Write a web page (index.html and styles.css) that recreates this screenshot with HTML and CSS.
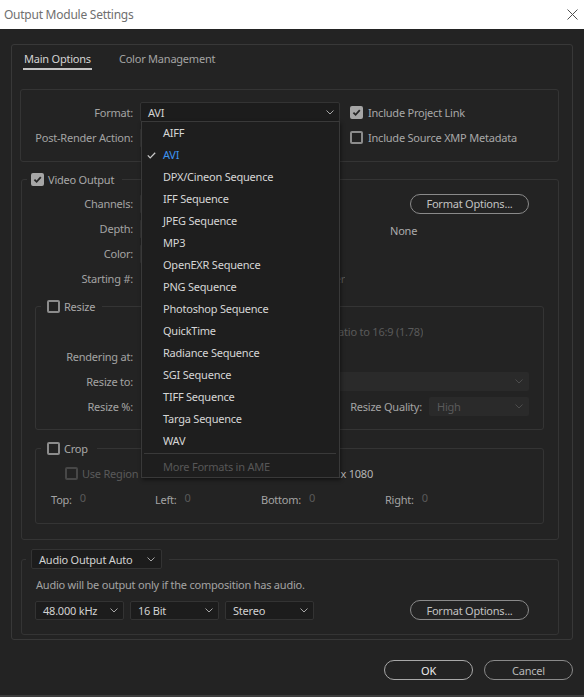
FILE: index.html
```html
<!DOCTYPE html>
<html lang="en">
<head>
<meta charset="utf-8">
<title>Output Module Settings</title>
<link rel="stylesheet" href="styles.css">
</head>
<body>
<div class="window">
  <header class="titlebar">
    <span class="title">Output Module Settings</span>
    <svg class="close" viewBox="0 0 11 11"><path d="M.5.5l10 10M10.5.5l-10 10"/></svg>
  </header>

  <main class="content">
    <section class="panel">
      <nav class="tabs">
        <span class="tab active">Main Options</span>
        <span class="tab">Color Management</span>
      </nav>

      <div class="format-box">
        <div class="frow">
          <span class="lbl flbl">Format:</span>
          <div class="sel format-sel">
            <span class="val">AVI</span>
            <svg class="chev" viewBox="0 0 8 5"><path d="M.5.5 4 4 7.5.5"/></svg>
            <ul class="menu">
              <li class="item">AIFF</li>
              <li class="item selected"><svg class="tick" viewBox="0 0 9 7"><path d="M.8 3.4 3.2 5.9 8.2.7"/></svg>AVI</li>
              <li class="item">DPX/Cineon Sequence</li>
              <li class="item">IFF Sequence</li>
              <li class="item">JPEG Sequence</li>
              <li class="item">MP3</li>
              <li class="item">OpenEXR Sequence</li>
              <li class="item">PNG Sequence</li>
              <li class="item">Photoshop Sequence</li>
              <li class="item">QuickTime</li>
              <li class="item">Radiance Sequence</li>
              <li class="item">SGI Sequence</li>
              <li class="item">TIFF Sequence</li>
              <li class="item">Targa Sequence</li>
              <li class="item">WAV</li>
              <li class="sep"></li>
              <li class="item more">More Formats in AME</li>
            </ul>
          </div>
          <label class="chk">
            <span class="cb on"><svg viewBox="0 0 9 9"><path d="M1.4 4.6 3.6 6.8 7.8 2.2"/></svg></span>
            <span>Include Project Link</span>
          </label>
        </div>
        <div class="frow">
          <span class="lbl flbl">Post-Render Action:</span>
          <div class="sel post-sel"></div>
          <label class="chk">
            <span class="cb"></span>
            <span>Include Source XMP Metadata</span>
          </label>
        </div>
      </div>

      <fieldset class="group video">
        <legend class="leg">
          <span class="leg-in">
            <span class="cb on"><svg viewBox="0 0 9 9"><path d="M1.4 4.6 3.6 6.8 7.8 2.2"/></svg></span>
            <span>Video Output</span>
          </span>
        </legend>
        <div class="video-in">
          <div class="vrow">
            <span class="lbl vlbl">Channels:</span>
            <div class="sel hidden-sel"></div>
            <button class="btn fmt-btn">Format Options...</button>
          </div>
          <div class="vrow">
            <span class="lbl vlbl">Depth:</span>
            <div class="sel hidden-sel"></div>
            <span class="none-val">None</span>
          </div>
          <div class="vrow">
            <span class="lbl vlbl">Color:</span>
            <div class="sel hidden-sel"></div>
          </div>
          <div class="vrow">
            <span class="lbl vlbl">Starting #:</span>
            <div class="tail start-tail">
              <span class="cb dis"></span>
              <span class="faint">Use Comp Frame Number</span>
            </div>
          </div>

          <fieldset class="group sub resize">
            <legend class="leg sub-leg">
              <span class="leg-in">
                <span class="cb"></span>
                <span>Resize</span>
              </span>
            </legend>
            <div class="sub-in">
              <div class="rrow">
                <span class="lbl rlbl"></span>
                <div class="tail lock-tail">
                  <span class="cb dis"></span>
                  <span class="faint">Lock Aspect Ratio to 16:9 (1.78)</span>
                </div>
              </div>
              <div class="rrow">
                <span class="lbl rlbl">Rendering at:</span>
              </div>
              <div class="rrow">
                <span class="lbl rlbl">Resize to:</span>
                <div class="dsel resize-sel"><span></span><svg class="chev dim" viewBox="0 0 8 5"><path d="M.5.5 4 4 7.5.5"/></svg></div>
              </div>
              <div class="rrow">
                <span class="lbl rlbl">Resize %:</span>
                <span class="quality-lbl">Resize Quality:</span>
                <div class="dsel quality-sel"><span class="faint">High</span><svg class="chev dim" viewBox="0 0 8 5"><path d="M.5.5 4 4 7.5.5"/></svg></div>
              </div>
            </div>
          </fieldset>

          <fieldset class="group sub crop">
            <legend class="leg sub-leg crop-leg">
              <span class="leg-in">
                <span class="cb"></span>
                <span>Crop</span>
              </span>
            </legend>
            <div class="sub-in crop-in">
              <div class="crow1">
                <span class="cb dis"></span>
                <span class="faint roi">Use Region of Interest</span>
                <span class="final">Final Size: 1920 x 1080</span>
              </div>
              <div class="crow2">
                <span class="cell"><span>Top:</span><span class="faint num">0</span></span>
                <span class="cell"><span>Left:</span><span class="faint num">0</span></span>
                <span class="cell"><span>Bottom:</span><span class="faint num">0</span></span>
                <span class="cell"><span>Right:</span><span class="faint num">0</span></span>
              </div>
            </div>
          </fieldset>
        </div>
      </fieldset>

      <fieldset class="group audio">
        <legend class="leg audio-leg">
          <div class="sel audio-sel"><span class="val">Audio Output Auto</span><svg class="chev" viewBox="0 0 8 5"><path d="M.5.5 4 4 7.5.5"/></svg></div>
        </legend>
        <div class="audio-in">
          <p class="audio-note">Audio will be output only if the composition has audio.</p>
          <div class="arow">
            <div class="sel asel"><span class="val">48.000 kHz</span><svg class="chev" viewBox="0 0 8 5"><path d="M.5.5 4 4 7.5.5"/></svg></div>
            <div class="sel asel"><span class="val">16 Bit</span><svg class="chev" viewBox="0 0 8 5"><path d="M.5.5 4 4 7.5.5"/></svg></div>
            <div class="sel asel"><span class="val">Stereo</span><svg class="chev" viewBox="0 0 8 5"><path d="M.5.5 4 4 7.5.5"/></svg></div>
            <button class="btn fmt-btn audio-btn">Format Options...</button>
          </div>
        </div>
      </fieldset>
    </section>

    <div class="actions">
      <button class="btn act ok">OK</button>
      <button class="btn act cancel">Cancel</button>
    </div>
  </main>
</div>
</body>
</html>
```

FILE: styles.css
```css
* { box-sizing: border-box; }

html, body {
  margin: 0;
  padding: 0;
}

body {
  width: 584px;
  height: 697px;
  overflow: hidden;
  background: #232323;
  font-family: "Noto Sans", "Open Sans", sans-serif;
  font-size: 11px;
  letter-spacing: -0.22px;
  color: #a3a3a3;
}

.window {
  height: 697px;
  display: flex;
  flex-direction: column;
  border-bottom: 2px solid #3c3c3c;
}

/* title bar */
.titlebar {
  flex: none;
  height: 29px;
  background: #ffffff;
  display: flex;
  align-items: center;
  justify-content: space-between;
  padding: 0 6px 0 4px;
}

.title {
  font-size: 12px;
  letter-spacing: -0.25px;
  color: #6f6f6f;
}

.close {
  width: 11px;
  height: 11px;
  stroke: #505050;
  stroke-width: 1;
  fill: none;
}

/* main */
.content {
  padding: 15px 11px 0;
}

.panel {
  height: 596px;
  border: 1px solid #383838;
  border-radius: 3px;
  padding: 0 13px 0 8px;
}

.tabs {
  height: 44px;
  display: flex;
  align-items: flex-start;
  padding-top: 6px;
  padding-left: 3px;
  gap: 26px;
}

.tab {
  line-height: 16px;
  padding: 0 1px 1px;
  border-bottom: 2px solid transparent;
  color: #a3a3a3;
}

.tab.active {
  color: #d4d4d4;
  border-bottom-color: #c4c4c4;
}

/* common */
.lbl {
  flex: none;
  text-align: right;
  color: #a3a3a3;
  white-space: nowrap;
}

.sel {
  display: flex;
  align-items: center;
  justify-content: space-between;
  height: 20px;
  background: #1c1c1c;
  border: 1px solid #333333;
  border-radius: 2px;
  padding: 0 5px 0 7px;
  color: #d2d2d2;
  white-space: nowrap;
}

.chev {
  width: 8px;
  height: 5px;
  flex: none;
  fill: none;
  stroke: #a6a6a6;
  stroke-width: 1;
}

.chev.dim { stroke: #4c4c4c; }

.cb {
  width: 13px;
  height: 13px;
  flex: none;
  display: inline-flex;
  border: 2px solid #8c8c8c;
  border-radius: 2px;
}

.cb svg {
  width: 9px;
  height: 9px;
  fill: none;
  stroke: #262626;
  stroke-width: 1.8;
}

.cb.on {
  background: #a6a6a6;
  border-color: #a6a6a6;
}

.cb.dis { border-color: #474747; }

.faint { color: #5a5a5a; white-space: nowrap; }

.chk {
  display: flex;
  align-items: center;
  gap: 5px;
  margin-left: 10px;
  color: #a8a8a8;
  white-space: nowrap;
}

.btn {
  font-family: inherit;
  font-size: 11px;
  letter-spacing: -0.22px;
  background: transparent;
  border: 1.5px solid #8a8a8a;
  border-radius: 10px;
  color: #c2c2c2;
  display: flex;
  align-items: center;
  justify-content: center;
  padding: 0;
  height: 20px;
}

/* format box */
.format-box {
  border: 1px solid #343434;
  border-radius: 3px;
  padding: 10px 0 11px;
}

.frow {
  height: 25px;
  display: flex;
  align-items: center;
}

.flbl { width: 112px; }

.format-sel {
  position: relative;
  width: 200px;
  margin-left: 7px;
  margin-bottom: 1px;
}

.post-sel {
  width: 200px;
  margin-left: 7px;
}

/* dropdown menu (overlay) */
.menu {
  position: absolute;
  top: 100%;
  left: 0;
  width: 199px;
  margin: 0;
  padding: 0;
  list-style: none;
  background: #1e1e1e;
  border: 1px solid #393939;
  box-shadow: 1px 2px 4px rgba(0, 0, 0, 0.45);
  z-index: 10;
}

.item {
  position: relative;
  height: 22px;
  line-height: 22px;
  padding-left: 21px;
  color: #d6d6d6;
  white-space: nowrap;
}

.item.selected { color: #3d94f2; }

.tick {
  position: absolute;
  left: 5px;
  top: 8px;
  width: 9px;
  height: 7px;
  fill: none;
  stroke: #c9c9c9;
  stroke-width: 1.3;
}

.sep {
  height: 1px;
  margin: 1px 3px 2px 2px;
  background: #393939;
}

.item.more {
  height: 21px;
  color: #575757;
}

/* group boxes */
fieldset.group {
  margin: 0;
  padding: 0;
  min-width: 0;
  border: 1px solid #343434;
  border-radius: 3px;
}

.leg {
  padding: 0 8px 0 4px;
  margin-left: 5px;
  height: 16px;
  color: #a8a8a8;
}

.leg-in {
  display: flex;
  align-items: center;
  gap: 4px;
  height: 16px;
  white-space: nowrap;
}

fieldset.video {
  margin: 9px 0 0 1px;
}

.video-in {
  padding: 4px 0 15px;
}

.vrow {
  height: 25px;
  display: flex;
  align-items: center;
}

.vlbl { width: 111px; }

.hidden-sel {
  width: 180px;
  margin-left: 7px;
}

.fmt-btn {
  width: 119px;
  margin-left: auto;
  margin-right: 29px;
  height: 20px;
}

.none-val {
  margin-left: 70px;
  margin-top: 3px;
  color: #ababab;
}

.tail {
  display: flex;
  align-items: center;
  justify-content: flex-end;
  gap: 5px;
  overflow: hidden;
  margin-left: 7px;
}

.start-tail { width: 205px; }

/* resize / crop */
fieldset.sub {
  margin: 7px 14px 0 13px;
}

.sub-leg {
  margin-left: 5px;
  padding: 0 7px 0 6px;
}

.crop-leg { padding-right: 9px; }

.sub-in {
  padding: 5px 0 10px;
}

.rrow {
  height: 25px;
  display: flex;
  align-items: center;
}

.rlbl { width: 97px; }

.lock-tail { width: 283px; }

.dsel {
  display: flex;
  align-items: center;
  justify-content: space-between;
  height: 19px;
  background: #2a2a2a;
  border-radius: 2px;
  padding: 0 6px 0 8px;
}

.resize-sel {
  width: 279px;
  margin-left: auto;
  margin-right: 14px;
}

.quality-lbl {
  margin-left: auto;
  color: #a3a3a3;
  white-space: nowrap;
}

.quality-sel {
  width: 100px;
  margin-left: 7px;
  margin-right: 14px;
}

fieldset.crop { margin-top: 10px; }

.crop-in { padding: 5px 0 10px; }

.crow1 {
  height: 25px;
  display: flex;
  align-items: center;
  padding-left: 29px;
}

.roi { margin-left: 4px; }

.final {
  margin-left: auto;
  margin-right: 170px;
  color: #b4b4b4;
  white-space: nowrap;
}

.crow2 {
  height: 27px;
  display: grid;
  grid-template-columns: 104px 106px 124px auto;
  align-items: center;
  padding-left: 15px;
}

.cell {
  display: flex;
  gap: 8px;
  white-space: nowrap;
}

.num { margin-top: -2px; }

/* audio */
fieldset.audio {
  margin: 9px 0 0 1px;
}

.audio-leg {
  height: 20px;
  margin-left: 4px;
  padding: 0 7px 0 5px;
}

.audio-sel {
  width: 131px;
  padding: 0 6px 0 7px;
}

.audio-in {
  padding: 8px 0 14px 13px;
}

.audio-note {
  margin: 0;
  padding-left: 1px;
  line-height: 16px;
  color: #a3a3a3;
}

.arow {
  display: flex;
  align-items: center;
  gap: 6px;
  margin-top: 7px;
}

.asel {
  width: 89px;
  height: 19px;
  padding: 0 5px 0 7px;
}

.audio-btn {
  margin-left: auto;
  margin-right: 29px;
}

/* bottom actions */
.actions {
  display: flex;
  justify-content: flex-end;
  gap: 11px;
  margin-top: 20px;
}

.act {
  width: 89px;
  height: 20px;
}

.ok {
  color: #ececec;
  border-color: #a8a8a8;
}

.cancel {
  color: #b8b8b8;
  border-color: #8a8a8a;
}
```
